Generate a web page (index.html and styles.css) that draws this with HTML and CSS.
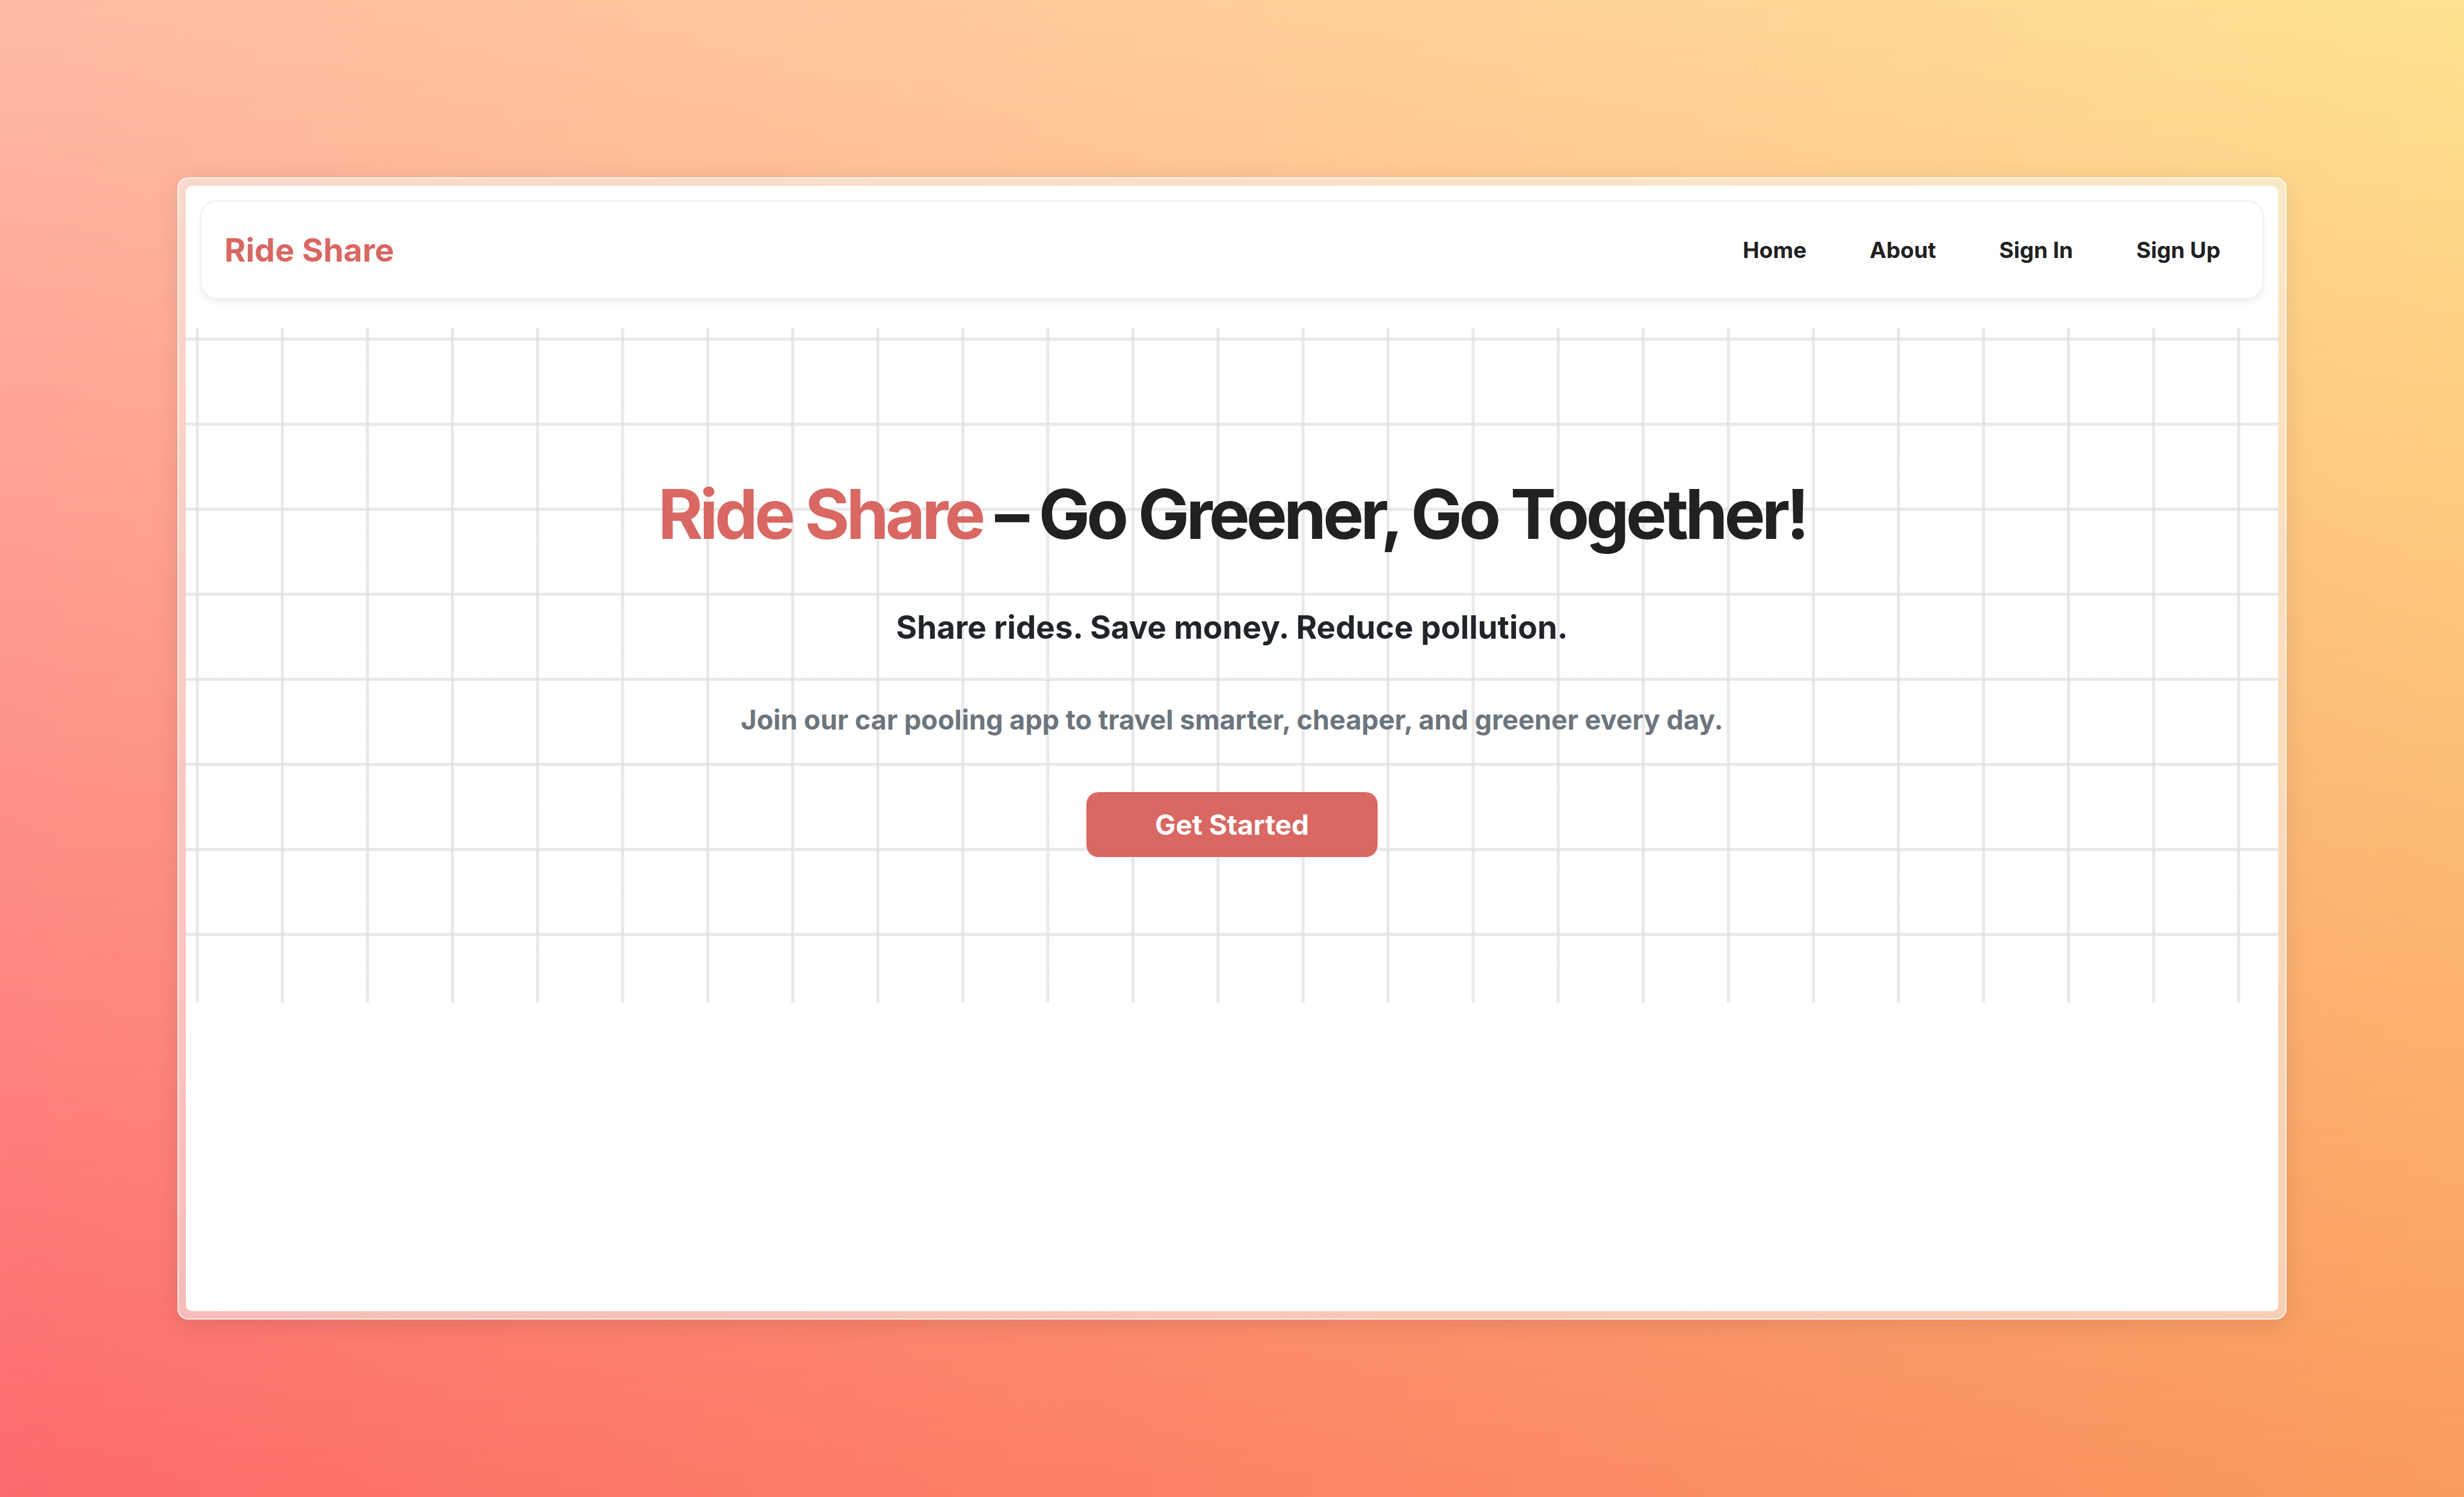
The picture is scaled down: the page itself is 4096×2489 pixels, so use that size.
FILE: index.html
```html
<!DOCTYPE html>
<html lang="en">
<head>
<meta charset="utf-8">
<meta name="viewport" content="width=device-width, initial-scale=1">
<title>Ride Share</title>
<link rel="stylesheet" href="styles.css">
</head>
<body class="backdrop">
  <div class="frame">
    <div class="screen">
      <header class="navbar">
        <a class="brand" href="#">Ride Share</a>
        <nav class="links">
          <a class="link" href="#">Home</a>
          <a class="link" href="#">About</a>
          <a class="link" href="#">Sign In</a>
          <a class="link" href="#">Sign Up</a>
        </nav>
      </header>
      <main class="hero">
        <h1 class="title"><span class="accent">Ride Share</span> – Go Greener, Go Together!</h1>
        <p class="tagline">Share rides. Save money. Reduce pollution.</p>
        <p class="pitch">Join our car pooling app to travel smarter, cheaper, and greener every day.</p>
        <button class="cta" type="button">Get Started</button>
      </main>
    </div>
  </div>
</body>
</html>
```
FILE: styles.css
```css
:root {
  --accent: #d96762;
  --line: rgba(225, 225, 225, 0.75);
  --cell: 3.452vw;
}

* {
  box-sizing: border-box;
}

body {
  margin: 0;
}

.backdrop {
  display: flex;
  min-height: 100vh;
  padding: 295px;
  position: relative;
  isolation: isolate;
  font-family: Inter, "Liberation Sans", sans-serif;
  color: #212529;
  background: linear-gradient(to right, #fd6b6c, #fa9c5e);
}

/* Upper tint, fading into the lower one */
.backdrop::before {
  content: "";
  position: absolute;
  inset: 0;
  z-index: -1;
  background: linear-gradient(to right, #ffbba3, #ffe291);
  mask-image: linear-gradient(to bottom, #000, transparent);
}

.frame {
  flex: 1;
  display: flex;
  padding: 12px;
  border: 2px solid rgba(255, 255, 255, 0.7);
  border-radius: 18px;
  background: rgba(246, 246, 246, 0.54);
  box-shadow: 0 8px 40px rgba(0, 0, 0, 0.1);
}

.screen {
  flex: 1;
  border-radius: 10px;
  background: #fff;
  overflow: hidden;
}

.navbar {
  display: flex;
  align-items: center;
  justify-content: space-between;
  height: 164px;
  margin: 24px 24px 48px;
  padding: 2px 70px 0 38px;
  border: 2px solid #f2f2f2;
  border-radius: 28px;
  box-shadow: 0 5px 10px rgba(0, 0, 0, 0.075);
}

.brand {
  font-size: 54px;
  line-height: 64px;
  font-weight: 700;
  color: var(--accent);
  text-decoration: none;
}

.links {
  display: flex;
  gap: 105px;
}

.link {
  font-size: 37px;
  line-height: 48px;
  font-weight: 700;
  color: #212121;
  text-decoration: none;
}

.hero {
  display: flex;
  flex-direction: column;
  align-items: center;
  padding: 242px 24px;
  text-align: center;
  background:
    repeating-linear-gradient(to right, transparent 0, transparent 16px, var(--line) 17px, var(--line) 21px, transparent 22px, transparent var(--cell)),
    repeating-linear-gradient(to bottom, transparent 0, transparent 16px, var(--line) 17px, var(--line) 21px, transparent 22px, transparent var(--cell));
}

.title {
  margin: 0 0 86px;
  font-size: 114px;
  line-height: 136px;
  font-weight: 700;
  letter-spacing: -0.05em;
  color: #212121;
}

.accent {
  color: var(--accent);
}

.tagline {
  margin: 0 0 86px;
  font-size: 53px;
  line-height: 68px;
  font-weight: 700;
}

.pitch {
  margin: 0 0 86px;
  font-size: 45px;
  line-height: 68px;
  font-weight: 700;
  color: #6c757d;
}

.cta {
  padding: 20px 114px;
  border: 0;
  border-radius: 20px;
  background: var(--accent);
  color: #fff;
  font-family: inherit;
  font-size: 46px;
  line-height: 68px;
  font-weight: 700;
}
```
